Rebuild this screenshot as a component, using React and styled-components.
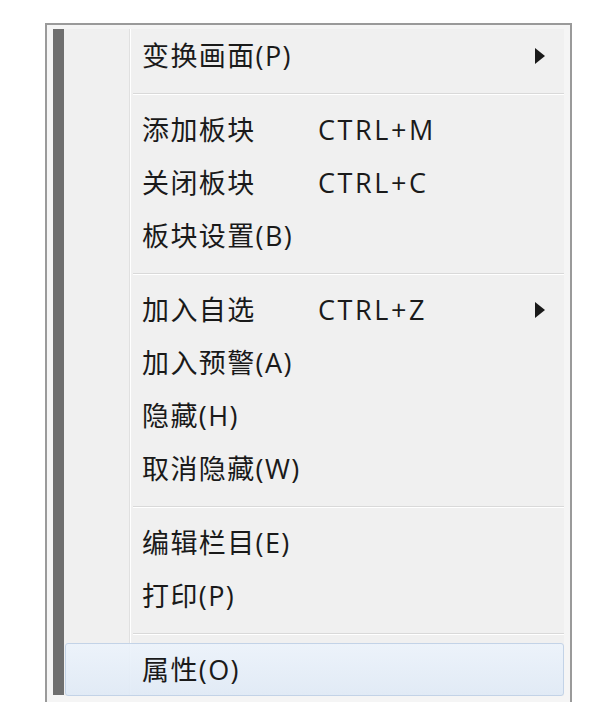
import React from "react";
import styled, { createGlobalStyle } from "styled-components";

const Global = createGlobalStyle`
  html, body { margin: 0; padding: 0; background: #ffffff; }
  body { overflow: hidden; }
`;

const Page = styled.div`
  width: 600px;
  height: 702px;
  padding: 23px 0 0 45px;
  box-sizing: border-box;
  overflow: hidden;
`;

const Menu = styled.div`
  width: 527px;
  height: 700px;
  box-sizing: border-box;
  border: 2px solid #9a9a9a;
  border-bottom: none;
  background: #f5f5f5;
  display: flex;
  padding: 4px 6px 0 6px;
  font-family: "Open Sans", "Noto Sans CJK SC", sans-serif;
  color: #1a1a1a;
`;

const Bar = styled.div`
  width: 11px;
  flex: none;
  height: 666px;
  background: #6f6f6f;
`;

const List = styled.div`
  flex: 1;
  display: flex;
  flex-direction: column;
  align-self: flex-start;
  background: linear-gradient(
    to right,
    #f0f0f0 0,
    #f0f0f0 65px,
    #e0e0e0 65px,
    #e0e0e0 66px,
    #ffffff 66px,
    #ffffff 67px,
    #f0f0f0 67px
  );
`;

const Item = styled.div`
  height: 53px;
  box-sizing: border-box;
  display: flex;
  align-items: center;
  padding-left: 76px;
  padding-right: 18px;
  font-size: 27px;
  letter-spacing: 1.4px;
  border: 1px solid ${(p) => (p.$active ? "#c3d3e7" : "transparent")};
  border-radius: 3px;
  margin-left: 1px;
  background: ${(p) =>
    p.$active
      ? "linear-gradient(to bottom, rgba(236,243,251,0.92), rgba(224,234,246,0.92))"
      : "transparent"};
`;

const Label = styled.span`
  width: 176px;
  flex: none;
  white-space: nowrap;
  line-height: 1;
  padding-bottom: 1px;
`;

const Shortcut = styled.span`
  flex: 1;
  white-space: nowrap;
  letter-spacing: 2.6px;
  line-height: 1;
  padding-bottom: 1px;
`;

const Arrow = styled.span`
  width: 0;
  height: 0;
  border-top: 8px solid transparent;
  border-bottom: 8px solid transparent;
  border-left: 10px solid #1a1a1a;
  flex: none;
`;

const Sep = styled.div`
  height: 21px;
  box-sizing: border-box;
  padding: 11px 0 0 69px;
`;

const SepLine = styled.div`
  height: 1px;
  background: #d9d9d9;
  border-bottom: 1px solid #ffffff;
`;

const groups = [
  [{ label: "变换画面(P)", sub: true }],
  [
    { label: "添加板块", key: "CTRL+M" },
    { label: "关闭板块", key: "CTRL+C" },
    { label: "板块设置(B)" },
  ],
  [
    { label: "加入自选", key: "CTRL+Z", sub: true },
    { label: "加入预警(A)" },
    { label: "隐藏(H)" },
    { label: "取消隐藏(W)" },
  ],
  [{ label: "编辑栏目(E)" }, { label: "打印(P)" }],
  [{ label: "属性(O)", active: true }],
];

export default function App() {
  return (
    <>
      <Global />
      <Page>
        <Menu>
          <Bar />
          <List>
            {groups.map((g, gi) => (
              <React.Fragment key={gi}>
                {gi > 0 && (
                  <Sep>
                    <SepLine />
                  </Sep>
                )}
                {g.map((it) => (
                  <Item key={it.label} $active={it.active}>
                    <Label>{it.label}</Label>
                    <Shortcut>{it.key || ""}</Shortcut>
                    {it.sub && <Arrow />}
                  </Item>
                ))}
              </React.Fragment>
            ))}
          </List>
        </Menu>
      </Page>
    </>
  );
}
